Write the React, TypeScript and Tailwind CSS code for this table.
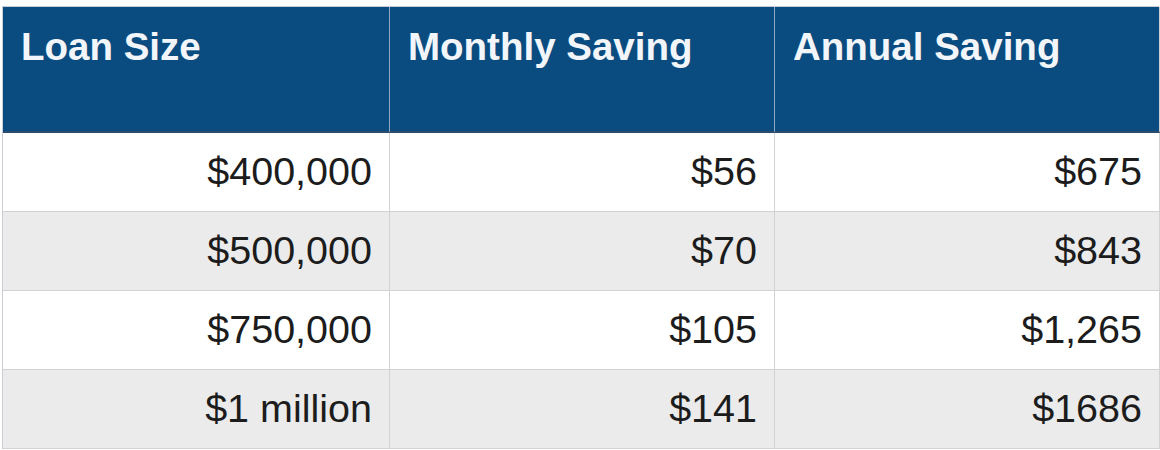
import React from "react";

const rows = [
  ["$400,000", "$56", "$675"],
  ["$500,000", "$70", "$843"],
  ["$750,000", "$105", "$1,265"],
  ["$1 million", "$141", "$1686"],
];

export default function App() {
  return (
    <div
      className="w-[1160px] h-[450px] bg-white pt-[6px] pl-[2px] overflow-hidden"
      style={{ fontFamily: '"Liberation Sans", Arial, sans-serif' }}
    >
      <div className="grid grid-cols-[387px_385px_385px] w-[1157px] border-l border-t border-[#c9ced4]">
        {["Loan Size", "Monthly Saving", "Annual Saving"].map((h, i) => (
          <div
            key={h}
            className={`h-[126px] bg-[#0b4c80] border-b-2 border-b-[#2a4a6e] pl-[18px] pt-[21px] text-[38.5px] leading-none font-bold text-[#f2f6fa] ${
              i < 2 ? "border-r border-r-[#8fa7c2]" : "border-r border-r-[#c9ced4]"
            }`}
          >
            {h}
          </div>
        ))}
        {rows.map((r, ri) =>
          r.map((c, ci) => (
            <div
              key={`${ri}-${ci}`}
              className={`h-[79px] flex items-center justify-end pr-[17px] text-[39.5px] leading-none text-[#1c1c1c] border-r border-b border-[#d2d2d2] ${
                ri % 2 === 1 ? "bg-[#ebebeb]" : "bg-white"
              }`}
            >
              {c}
            </div>
          ))
        )}
      </div>
    </div>
  );
}
